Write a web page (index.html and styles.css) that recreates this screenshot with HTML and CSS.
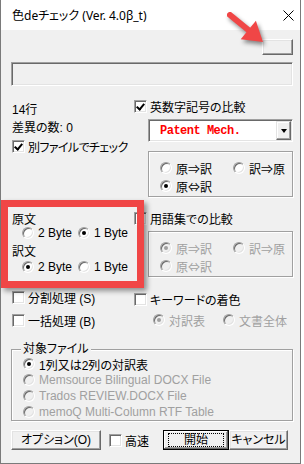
FILE: index.html
```html
<!DOCTYPE html>
<html lang="ja">
<head>
  <meta charset="UTF-8">
  <title>色deチェック</title>
  <link rel="stylesheet" href="styles.css">
</head>
<body>
  <div class="window">
    <div class="titlebar">
      <span class="title">色deチェック (Ver. 4.0β_t)</span>
      <svg class="close" width="11" height="11" viewBox="0 0 11 11"><path d="M0.5 0.5L10.5 10.5M10.5 0.5L0.5 10.5" stroke="#000" stroke-width="1"/></svg>
    </div>

    <div class="client">
      <div class="top-row"><button class="btn btn-small"></button></div>
      <div class="progress"></div>

      <div class="columns">
        <div class="col-left">
          <div class="row count">14行</div>
          <div class="row diff">差異の数: 0</div>
          <div class="row check-row sep-file"><span class="check on"></span>別ファイルでチェック</div>

          <div class="byte-label src">原文</div>
          <div class="byte-pair">
            <div class="opt"><span class="radio"></span>2 Byte</div>
            <div class="opt"><span class="radio on"></span>1 Byte</div>
          </div>
          <div class="byte-label dst">訳文</div>
          <div class="byte-pair dst-pair">
            <div class="opt"><span class="radio on"></span>2 Byte</div>
            <div class="opt"><span class="radio"></span>1 Byte</div>
          </div>

          <div class="row check-row split"><span class="check"></span>分割処理 (S)</div>
          <div class="row check-row batch"><span class="check"></span>一括処理 (B)</div>
        </div>

        <div class="col-right">
          <div class="row check-row alnum"><span class="check on"></span>英数字記号の比較</div>
          <div class="combo">
            <span class="combo-text">Patent Mech.</span>
            <span class="combo-btn"><span class="tri"></span></span>
          </div>
          <div class="group group-compare">
            <div class="opt"><span class="radio"></span>原⇒訳</div>
            <div class="opt"><span class="radio"></span>訳⇒原</div>
            <div class="opt"><span class="radio on"></span>原⇔訳</div>
          </div>

          <div class="row check-row glossary"><span class="check"></span>用語集での比較</div>
          <div class="group group-glossary disabled">
            <div class="opt"><span class="radio on"></span>原⇒訳</div>
            <div class="opt"><span class="radio"></span>訳⇒原</div>
            <div class="opt"><span class="radio"></span>原⇔訳</div>
          </div>

          <div class="row check-row keyword"><span class="check"></span>キーワードの着色</div>
          <div class="row scope disabled">
            <div class="opt opt-table"><span class="radio on"></span>対訳表</div>
            <div class="opt"><span class="radio"></span>文書全体</div>
          </div>
        </div>
      </div>

      <fieldset class="target">
        <legend>対象ファイル</legend>
        <div class="opt file-row"><span class="radio on"></span>1列又は2列の対訳表</div>
        <div class="opt file-row disabled"><span class="radio"></span>Memsource Bilingual DOCX File</div>
        <div class="opt file-row disabled"><span class="radio"></span>Trados REVIEW.DOCX File</div>
        <div class="opt file-row disabled"><span class="radio"></span>memoQ Multi-Column RTF Table</div>
      </fieldset>

      <div class="actions">
        <button class="btn btn-options">オプション(O)</button>
        <div class="check-row fast"><span class="check"></span>高速</div>
        <button class="btn btn-default"><span class="focus">開始</span></button>
        <button class="btn btn-cancel">キャンセル</button>
      </div>
    </div>

    <div class="callout-box"></div>
    <svg class="callout-arrow" width="52" height="42" viewBox="220 8 52 42">
      <path d="M230 15L249 30.5" stroke="#f04646" stroke-width="6" stroke-linecap="round"/>
      <polygon points="240.7,39.3 255.9,20.7 263,42" fill="#f04646"/>
    </svg>
  </div>
</body>
</html>
```

FILE: styles.css
```css
body {
  margin: 0;
  font-family: "Liberation Sans", "Noto Sans CJK JP", sans-serif;
  font-size: 12px;
  color: #000;
  background: #fff;
  font-feature-settings: "palt";
}
.window {
  position: relative;
  width: 301px;
  height: 464px;
  box-sizing: border-box;
  border: 1px solid #7a7a7a;
  border-top: none;
  background: #f0f0f0;
}
.titlebar {
  height: 30px;
  background: #fff;
  display: flex;
  align-items: center;
  justify-content: space-between;
  padding: 0 6px 0 11px;
}
.title {
  font-family: "Noto Sans", "Noto Sans CJK JP", sans-serif;
  font-size: 12px;
}
.client {
  padding: 9px 7px 0 10px;
  display: flex;
  flex-direction: column;
}

/* classic controls */
.btn {
  box-sizing: border-box;
  background: #f0f0f0;
  border: 1px solid;
  border-color: #fff #696969 #696969 #fff;
  box-shadow: inset -1px -1px 0 #a0a0a0, inset 1px 1px 0 #e3e3e3;
  font: inherit;
  line-height: 14px;
  padding: 0;
  height: 20px;
  white-space: nowrap;
}
.check {
  display: inline-block;
  position: relative;
  width: 13px;
  height: 13px;
  box-sizing: border-box;
  background: #fff;
  border: 1px solid;
  border-color: #a0a0a0 #fff #fff #a0a0a0;
  box-shadow: inset 1px 1px 0 #696969, inset -1px -1px 0 #e3e3e3;
  flex: none;
}
.check.on::after {
  content: "";
  position: absolute;
  left: 3px;
  top: 1px;
  width: 3px;
  height: 6px;
  border-right: 2px solid #000;
  border-bottom: 2px solid #000;
  transform: rotate(40deg);
}
.radio {
  display: inline-block;
  position: relative;
  width: 12px;
  height: 12px;
  box-sizing: border-box;
  border-radius: 50%;
  background: #fff;
  border: 1px solid;
  border-color: #a0a0a0 #fff #fff #a0a0a0;
  box-shadow: inset 1px 1px 0 #696969, inset -1px -1px 0 #e3e3e3;
  flex: none;
}
.radio.on::after {
  content: "";
  position: absolute;
  left: 3px;
  top: 3px;
  width: 4px;
  height: 4px;
  border-radius: 50%;
  background: #000;
}
.disabled {
  color: #a0a0a0;
}
.disabled .radio {
  background: #f0f0f0;
}
.disabled .radio.on::after {
  background: #a0a0a0;
}
.row {
  display: flex;
  align-items: center;
  height: 14px;
  white-space: nowrap;
}
.check-row {
  display: flex;
  align-items: center;
  gap: 3px;
  white-space: nowrap;
}
.check-row .check {
  margin-left: 1px;
}
.opt {
  display: flex;
  align-items: center;
  gap: 4px;
  height: 14px;
  white-space: nowrap;
}

/* top */
.top-row {
  display: flex;
  justify-content: flex-end;
}
.btn-small {
  width: 31px;
  height: 16px;
}
.progress {
  margin-top: 7px;
  height: 24px;
  box-sizing: border-box;
  border: 1px solid;
  border-color: #a0a0a0 #fff #fff #a0a0a0;
  box-shadow: inset 1px 1px 0 #696969, inset -1px -1px 0 #e3e3e3;
}

/* columns */
.columns {
  display: grid;
  grid-template-columns: 122px 1fr;
}
.col-left, .col-right {
  display: flex;
  flex-direction: column;
  min-width: 0;
}
.count { margin-top: 15px; padding-left: 1px; }
.diff { margin-top: 4px; padding-left: 1px; }
.sep-file { margin-top: 6px; letter-spacing: -0.6px; }
.byte-label {
  height: 12px;
  line-height: 12px;
  padding-left: 1px;
}
.src { margin-top: 61px; }
.dst { margin-top: 6px; }
.byte-pair {
  display: grid;
  grid-template-columns: 56px auto;
  padding-left: 11px;
  height: 14px;
}
.dst-pair { margin-top: 2px; }
.split { margin-top: 16px; }
.batch { margin-top: 9px; }

.alnum { margin-top: 13px; }
.combo {
  margin: 6px 0 0 15px;
  height: 23px;
  box-sizing: border-box;
  background: #fff;
  border: 1px solid;
  border-color: #a0a0a0 #fff #fff #a0a0a0;
  box-shadow: inset 1px 1px 0 #696969, inset -1px -1px 0 #e3e3e3;
  display: flex;
  align-items: center;
  justify-content: space-between;
  padding: 1px 1px 1px 11px;
}
.combo-text {
  color: #ff0000;
  font-family: "Liberation Mono", monospace;
  font-weight: bold;
  font-size: 12px;
  letter-spacing: -0.5px;
}
.combo-btn {
  width: 15px;
  height: 19px;
  box-sizing: border-box;
  background: #f0f0f0;
  border: 1px solid;
  border-color: #e3e3e3 #696969 #696969 #e3e3e3;
  box-shadow: inset -1px -1px 0 #a0a0a0, inset 1px 1px 0 #fff;
  display: flex;
  align-items: center;
  justify-content: center;
}
.tri {
  width: 0;
  height: 0;
  border-left: 3.5px solid transparent;
  border-right: 3.5px solid transparent;
  border-top: 4px solid #000;
}
.group {
  margin-left: 15px;
  height: 46px;
  box-sizing: border-box;
  border: 1px solid #a0a0a0;
  box-shadow: inset 1px 1px 0 #fff, 1px 1px 0 #fff;
  display: grid;
  grid-template-columns: 73px auto;
  grid-auto-rows: 14px;
  row-gap: 4px;
  padding: 9px 0 0 11px;
  font-family: "Noto Sans CJK JP", sans-serif;
}
.group-compare { margin-top: 9px; }
.glossary { margin-top: 14px; }
.group-glossary { margin-top: 6px; }
.keyword { margin-top: 15px; }
.scope {
  margin-top: 7px;
  padding-left: 20px;
}
.opt-table { width: 70px; }

/* target files */
.target {
  margin: 15px 0 0;
  padding: 0 0 0 9px;
  height: 79px;
  box-sizing: border-box;
  border: 1px solid #a0a0a0;
  box-shadow: inset 1px 1px 0 #fff, 1px 1px 0 #fff;
  min-width: 0;
}
.target legend {
  padding: 0 2px;
  height: 14px;
  line-height: 14px;
  background: #f0f0f0;
}
.file-row {
  height: 16px;
  padding-left: 2px;
}

/* bottom buttons */
.actions {
  margin-top: 9px;
  display: flex;
  align-items: center;
  height: 20px;
}
.btn-options { width: 90px; }
.fast { margin-left: 7px; width: 54px; }
.btn-default {
  width: 66px;
  border: 1px solid #000;
  box-shadow: inset -1px -1px 0 #696969, inset 1px 1px 0 #fff, inset -2px -2px 0 #a0a0a0;
  padding: 2px 4px;
  margin-left: 1px;
}
.btn-default .focus {
  display: flex;
  align-items: center;
  justify-content: center;
  height: 100%;
  box-sizing: border-box;
  border: 1px dotted #000;
  line-height: 12px;
}
.btn-cancel {
  width: 59px;
}

/* callouts */
.callout-box {
  position: absolute;
  left: 0;
  top: 200px;
  width: 143px;
  height: 88px;
  box-sizing: border-box;
  border: 7px solid #f04646;
  box-shadow: 3px 3px 5px rgba(0, 0, 0, 0.4);
}
.callout-arrow {
  position: absolute;
  left: 219px;
  top: 8px;
  filter: drop-shadow(2px 3px 2px rgba(0, 0, 0, 0.45));
}
```
